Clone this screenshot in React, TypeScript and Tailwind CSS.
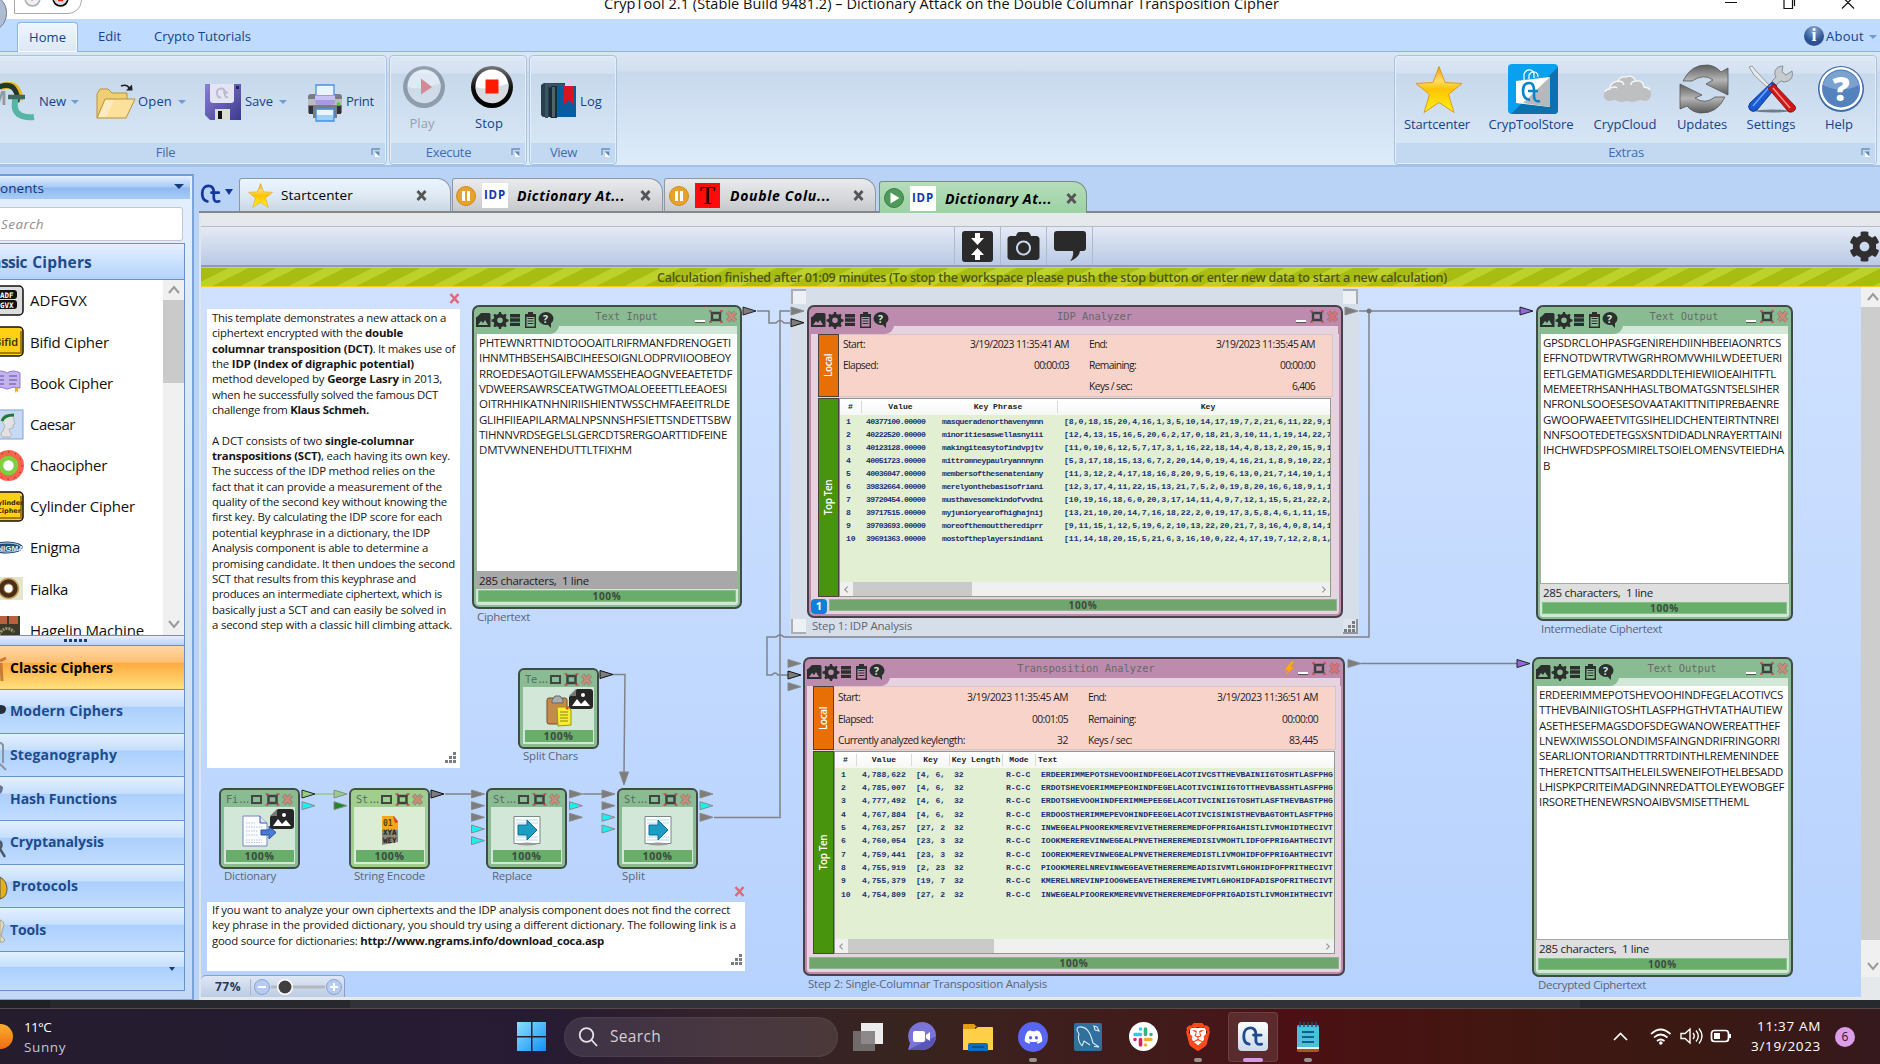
import React, { useLayoutEffect, useRef } from 'react';
import { FaCog, FaCamera, FaDiscord } from 'react-icons/fa';
import { SiBrave } from 'react-icons/si';

type Kids = { children?: React.ReactNode };

/* Text run whose tracking is adjusted so that it fills a given width. */
function Fit({ w, c = '', children }: Kids & { w: number; c?: string }) {
  const ref = useRef<HTMLSpanElement>(null);
  useLayoutEffect(() => {
    const el = ref.current;
    if (!el) return;
    el.style.letterSpacing = '0px';
    const n = (el.textContent || '').length || 1;
    el.style.letterSpacing = `${(w - el.getBoundingClientRect().width) / n}px`;
  }, [w]);
  return <span ref={ref} className={`inline-block whitespace-pre ${c}`}>{children}</span>;
}

/* ---------- shared drawings ---------- */
function Star({ c }: { c: string }) {
  return (
    <svg className={c} viewBox="0 0 48 48">
      <defs>
        <linearGradient id="starFill" x1="0" y1="0" x2="0" y2="1">
          <stop offset="0" stopColor="#fb9b12" />
          <stop offset=".3" stopColor="#fedc6a" />
          <stop offset=".5" stopColor="#ffc400" />
          <stop offset="1" stopColor="#fff31c" />
        </linearGradient>
      </defs>
      <path d="M24 1l6 16 17 1-13.500 11 5.500 18-15-10-15 10 5.500-18L1 18l17-1z" fill="url(#starFill)" stroke="#dd9a1d" strokeWidth="1" />
    </svg>
  );
}

function CtMark({ c, color = '#12449a', w = 3 }: { c: string; color?: string; w?: number }) {
  return (
    <svg className={c} viewBox="0 0 24 22" fill="none" stroke={color} strokeWidth={w} strokeLinecap="round">
      <path d="M7.500 19C3 18.500 1.800 14.500 1.800 10.500 1.800 5 5 2 8.500 2c4 0 6 3 6 7v6.500c0 3 2 4.500 6 3.500M12 9.500h8" />
    </svg>
  );
}

function Caret({ c = '' }: { c?: string }) {
  return <span className={`inline-block h-0 w-0 border-x-[4px] border-t-[4px] border-x-transparent border-t-[#6d9cd3] ${c}`} />;
}

function RoundButton({ play = false, c }: { play?: boolean; c: string }) {
  return (
    <svg viewBox="0 0 44 44" className={c} opacity={play ? 0.42 : 1}>
      <defs>
        <linearGradient id="rim" x1="0" y1="0" x2="0" y2="1">
          <stop offset="0" stopColor="#777" />
          <stop offset=".5" stopColor="#111" />
          <stop offset="1" stopColor="#000" />
        </linearGradient>
      </defs>
      <circle cx="22" cy="22.500" r="21" fill={play ? '#3c4654' : 'url(#rim)'} />
      <circle cx="22" cy="21.500" r="16.500" fill="#fff" />
      <path d="M5.500 22.500c9 3 19 .5 33-3.500v3a16.500 16.500 0 0 1-33 .5z" fill="#d7dbe2" />
      {play ? <path d="M19 14l11 8.500L19 30z" fill="#e51a1a" /> : <path d="M15.500 15h13v14h-13z" fill="#ff1a00" />}
    </svg>
  );
}

/* ---------- ribbon ---------- */
function Launcher() {
  return (
    <svg className="h-[9px] w-[10px]" viewBox="0 0 10 9">
      <path d="M1 7V1h8" fill="none" stroke="#6a90b8" strokeWidth="1.300" />
      <path d="M4 4h5v5H4z" fill="#fff" />
      <path d="M3.500 3.500h5v5z" fill="#5f88b4" />
    </svg>
  );
}

function Group({ title, c, foot = 'pr-[19px]', children }: Kids & { title: string; c: string; foot?: string }) {
  return (
    <section className={`flex h-[110px] flex-col overflow-hidden rounded-[4px] border border-[#a9c3de] bg-[linear-gradient(180deg,#dde8f5_0,#d4e1f1_17px,#c7d8ec_18px,#d6e6f5_88px)] shadow-[inset_0_0_0_1px_#e3eefa] ${c}`}>
      <div className="relative flex min-h-0 flex-1">{children}</div>
      <footer className={`relative mx-px mb-px flex h-[20px] items-center justify-center bg-[#c2d9f1] text-[13px] text-[#3e6cb5] ${foot}`}>
        <span className="tracking-[-0.3px]">{title}</span>
        <span className="absolute right-[4px] top-[5px] flex"><Launcher /></span>
      </footer>
    </section>
  );
}

function BigButton({ label, w, c, icon }: { label: string; w: number; c: string; icon: React.ReactNode }) {
  return (
    <div className={`flex flex-col items-center pt-[8px] ${c}`}>
      <div className="flex h-[50px] items-center justify-center">{icon}</div>
      <div className="mt-px leading-[19px]"><Fit w={w}>{label}</Fit></div>
    </div>
  );
}

const FolderIcon = () => (
  <svg className="h-[38px] w-[40px]" viewBox="0 0 40 38">
    <path d="M1 35V11l3-5h8l4 4h15v7" fill="#f0cf74" stroke="#b8913a" />
    <path d="M1 35l8-19h30l-9 19z" fill="#fbe19b" stroke="#b8913a" />
    <path d="M2.500 34l7.500-17h8l-8 17z" fill="#fff" opacity=".35" />
    <path d="M25 3c5-2 8 0 9 4" fill="none" stroke="#222" strokeWidth="1.600" />
    <path d="M30 7.500h6.500l-.5-6z" fill="#222" />
  </svg>
);
const SaveIcon = () => (
  <svg className="h-[38px] w-[38px]" viewBox="0 0 38 38">
    <defs>
      <linearGradient id="flp" x1="0" y1="0" x2="1" y2="1">
        <stop offset="0" stopColor="#8a80d6" /><stop offset="1" stopColor="#3c3a8c" />
      </linearGradient>
    </defs>
    <path d="M1 1h36v36H6l-5-5z" fill="url(#flp)" />
    <path d="M6 1h24v16c0 2-1 3-3 3H9c-2 0-3-1-3-3z" fill="#e4e4f2" />
    <path d="M17 14.500c-5 .5-6-9 0-9 4 0 4 3 4 6 0 2 1 3 3 2.500M19 9.500h5" fill="none" stroke="#b9bbd0" strokeWidth="2" />
    <path d="M11 26h15v11H11z" fill="#dcdcd8" />
    <path d="M14 28h4v8h-4z" fill="#111" />
    <path d="M32 3h3v3h-3z" fill="#242463" />
  </svg>
);
const PrintIcon = () => (
  <svg className="h-[38px] w-[36px]" viewBox="0 0 36 38">
    <path d="M1 13q0-3 3-3h28q3 0 3 3v16h-5v5H6v-5H1z" fill="#7a7c84" />
    <path d="M1 15h34v6H1z" fill="#b9bac4" />
    <path d="M2 22h4v8H2zM30 22h4v8h-4z" fill="#303138" />
    <path d="M9 1h18v12H9z" fill="#eaf4ff" stroke="#4a90e2" strokeWidth="1.300" />
    <path d="M8 11h20v6q0 4-4 4H12q-4 0-4-4z" fill="#a69be0" />
    <path d="M8 12h20v4H8z" fill="#c9c1f4" />
    <path d="M9 25h18v12H9z" fill="#9fd0f6" stroke="#4a90e2" strokeWidth="1.300" />
    <path d="M10 26h16v5H10z" fill="#e8f5ff" />
    <circle cx="31.500" cy="20" r="1.700" fill="#42d410" />
  </svg>
);
const BooksIcon = () => (
  <svg className="h-[38px] w-[38px]" viewBox="0 0 38 38">
    <path d="M1 3l3-2h21v34H3l-2-2z" fill="#27404e" />
    <path d="M5 1l20 1v3H8v31H5z" fill="#3c5362" />
    <path d="M9 7l3-3h24v31H11l-2-2z" fill="#0d63a8" />
    <path d="M9 7l3-3h5v32h-6l-2-2z" fill="#1c2b38" />
    <path d="M12 5h3v30h-3z" fill="#4e6370" />
    <path d="M17 4h19v31H17z" fill="#0b5c9e" />
    <path d="M24 4h10v19l-5-5-5 5z" fill="#d8141c" />
  </svg>
);
const NewIcon = () => (
  <svg className="h-[40px] w-[36px]" viewBox="0 0 36 40">
    <text x="-11" y="23" fontFamily="Open Sans" fontSize="19" fontWeight="700" fill="#8b9aa5">M</text>
    <path d="M0 5q14-5 18 5 2 4 1 8" fill="none" stroke="#e7b91b" strokeWidth="7" />
    <path d="M-1 5q13-5 17 5 2 4 1 10" fill="none" stroke="#26352f" strokeWidth="5" />
    <path d="M16 14q-4 15 4 19 5 3 14 2" fill="none" stroke="#56b5a5" strokeWidth="6" />
    <path d="M8 15h17" stroke="#3a6a60" strokeWidth="4.500" />
  </svg>
);
const StoreIcon = () => (
  <svg className="h-[50px] w-[50px]" viewBox="0 0 50 50">
    <rect width="50" height="50" rx="4" fill="#0aa0f0" />
    <path d="M50 3v43q0 4-4 4H3z" fill="#0a72ac" />
    <path d="M8 17l34-4v30L8 39z" fill="#fff" />
    <path d="M42 13v30L15 39z" fill="#b6b8ba" />
    <path d="M16 16V10q2-5 7-4l3 2v6M21 15v-4q2-4 6-3 3 1 3 5" fill="none" stroke="#fff" strokeWidth="1.200" />
    <path d="M22 36c-5 0-7-5-7-9 0-5 2-8 6-8s5 3 5 7v6c0 4 2 6 6 5M20 27h10" fill="none" stroke="#0b83c9" strokeWidth="2.600" />
  </svg>
);
const CloudIcon = () => (
  <svg className="h-[28px] w-[49px]" viewBox="0 0 49 28">
    <path d="M6 26q-6-1-5-7 1-5 6-5 0-7 8-8 2-5 8-4 6-3 10 4 7-1 8 6 8 1 7 8-1 5-5 6l-6-1-7 2-6-1-6 1-6-2z" fill="#bdbfc0" />
    <path d="M2 17q1-3 5-3 0-7 8-8 2-5 8-4 6-3 10 4 7-1 8 6 4 0 6 3M15 6q5 0 6 4M33 6q-5 0-5 4M8 13q4-2 6 0" fill="none" stroke="#f8f8f8" strokeWidth="1.300" />
  </svg>
);
const UpdatesIcon = () => (
  <svg className="h-[50px] w-[50px]" viewBox="0 0 50 50">
    <defs>
      <linearGradient id="upd" x1="0" y1="0" x2="0" y2="1">
        <stop offset="0" stopColor="#5e5e5e" /><stop offset=".5" stopColor="#b4b4b4" /><stop offset="1" stopColor="#585858" />
      </linearGradient>
    </defs>
    <g fill="url(#upd)" stroke="#555" strokeWidth=".8">
      <path d="M4 17Q12 0 29 1q8 1 13 7l7-4v27L27 20l7-4q-9-7-21 1z" />
      <path d="M46 33Q38 50 21 49q-8-1-13-7l-7 3V20l22 11-7 3q10 7 20-1z" />
    </g>
  </svg>
);
const SettingsIcon = () => (
  <svg className="h-[48px] w-[48px]" viewBox="0 0 48 48">
    <ellipse cx="24" cy="46" rx="17" ry="1.500" fill="#6f7d8c" />
    <path d="M1 2l3-1 5 6 14 15-2 2L6 10z" fill="#e6e9ec" stroke="#888" strokeWidth=".8" />
    <path d="M27 6q2-5 8-5l-1 6 4 3 6-4q2 7-4 10-4 2-7 0l-5 4-4-4 4-4q-2-3-1-6z" fill="#c6cbd0" stroke="#7b7f84" strokeWidth=".8" />
    <path d="M24 17l5 4L9 45q-4 3-7 0-3-3 0-7z" fill="#1959d4" stroke="#0b2b7c" strokeWidth=".8" />
    <path d="M23 20L5 41" stroke="#6ea2ff" strokeWidth="1.500" />
    <path d="M20 23l6-4 21 22q2 4-3 6-4 1-5-2z" fill="#d01717" stroke="#7c0b0b" strokeWidth=".8" />
    <path d="M25 23l17 20" stroke="#ff8c8c" strokeWidth="1.500" />
  </svg>
);
const HelpIcon = () => (
  <svg className="h-[48px] w-[48px]" viewBox="0 0 48 48">
    <circle cx="24" cy="24" r="23" fill="#3d6aa8" />
    <circle cx="24" cy="23.500" r="21.500" fill="#fff" />
    <circle cx="24" cy="23.500" r="19" fill="#5382bd" />
    <path d="M6 20a18.500 18.500 0 0 1 36 0q-18 9-36 0z" fill="#7ba1d0" />
    <text x="24" y="36" textAnchor="middle" fontFamily="Open Sans" fontSize="34" fontWeight="800" fill="#fff">?</text>
  </svg>
);

function Ribbon() {
  return (
    <div className="flex flex-col">
      <div className="relative h-[19px] overflow-hidden bg-white">
        <div className="absolute -top-[10px] left-[14px] h-[24px] w-[68px] rounded-br-[14px] border border-[#a9a9a9]" />
        <div className="absolute left-[24px] top-[-10px]"><RoundButton play c="h-[17px] w-[17px]" /></div>
        <div className="absolute left-[52px] top-[-10px]"><RoundButton c="h-[17px] w-[17px]" /></div>
        <div className="absolute left-[604px] top-[-8px] text-[14.5px] leading-[23px] text-[#111]">
          <Fit w={675}>CrypTool 2.1 (Stable Build 9481.2) – Dictionary Attack on the Double Columnar Transposition Cipher</Fit>
        </div>
        <svg className="absolute right-0 top-0 h-[10px] w-[160px]" viewBox="0 0 160 10" fill="none" stroke="#111" strokeWidth="1.200">
          <path d="M5 2.500h12M64 -2v10.500h8.500V-1M74.500 -2v8M122 8.500L134 -3.500M134 8.500L122 -3.500" />
        </svg>
      </div>
      <div className="relative flex h-[33px] items-end border-b border-[#8db2e3] bg-[#bfdbff] text-[13px] text-[#15428b]">
        <div className="absolute -left-[30px] -top-[25px] h-[38px] w-[37px] rounded-full border border-[#6f7f96] bg-[#aebdd2]" />
        <div className="ml-[17px] -mb-px flex h-[30px] w-[61px] items-center justify-center rounded-t-[4px] border border-b-0 border-[#8db2e3] bg-[linear-gradient(#eff5fc,#dde8f5)] shadow-[inset_0_0_0_1px_#f6faff]"><Fit w={37}>Home</Fit></div>
        <div className="ml-[20px] flex h-[28px] items-center"><Fit w={23}>Edit</Fit></div>
        <div className="ml-[33px] flex h-[28px] items-center"><Fit w={97}>Crypto Tutorials</Fit></div>
        <div className="ml-auto mr-[3px] flex h-[28px] items-center">
          <span className="mb-[3px] mr-[2px] flex h-[20px] w-[20px] items-center justify-center rounded-full bg-[radial-gradient(circle_at_50%_20%,#8fa9cf,#2c5292_60%)] font-['Liberation_Serif'] text-[18px] font-bold text-white">i</span>
          <Fit w={38}>About</Fit><Caret c="ml-[5px]" />
        </div>
      </div>
      <div className="flex h-[115px] border-b-2 border-b-[#a3c2ea] bg-[linear-gradient(180deg,#dbe6f4_0,#d3e0f0_18px,#c9d9ed_20px,#dcecfa_112px)] pt-[3px] text-[13px] text-[#15428b]">
        <Group title="File" c="-ml-[60px] w-[447px]" foot="pl-[4px]">
          <div className="ml-[59px] flex flex-1 items-center pt-[4px]">
            <div className="flex w-[36px]"><NewIcon /></div>
            <div className="ml-[3px]"><Fit w={27}>New</Fit></div><Caret c="ml-[5px]" />
            <div className="ml-[17px] flex"><FolderIcon /></div><div className="ml-[2px]"><Fit w={34}>Open</Fit></div><Caret c="ml-[6px]" />
            <div className="ml-[18px] flex"><SaveIcon /></div><div className="ml-[3px]"><Fit w={28}>Save</Fit></div><Caret c="ml-[6px]" />
            <div className="ml-[20px] flex pt-[2px]"><PrintIcon /></div><div className="ml-[3px]"><Fit w={28}>Print</Fit></div>
          </div>
        </Group>
        <Group title="Execute" c="ml-[2px] w-[138px]">
          <div className="ml-[12px] flex w-[44px] flex-col items-center pt-[8px] text-[#9aa0a8]"><RoundButton play c="h-[45px] w-[44px]" /><div className="mr-[4px] mt-[5px] leading-[19px]"><Fit w={25}>Play</Fit></div></div>
          <div className="ml-[24px] flex w-[44px] flex-col items-center pt-[8px]"><RoundButton c="h-[45px] w-[44px]" /><div className="mr-[6px] mt-[5px] leading-[19px]"><Fit w={28}>Stop</Fit></div></div>
        </Group>
        <Group title="View" c="ml-[2px] w-[88px]">
          <div className="ml-[10px] flex items-center pt-[2px]"><BooksIcon /><div className="ml-[2px] pt-[2px]"><Fit w={22}>Log</Fit></div></div>
        </Group>
        <Group title="Extras" c="ml-auto mr-[3px] w-[483px]">
          <BigButton c="ml-[2px] w-[80px]" label="Startcenter" w={66} icon={<Star c="ml-[3px] h-[49px] w-[48px]" />} />
          <BigButton c="ml-[9px] w-[90px]" label="CrypToolStore" w={85} icon={<div className="ml-[3px]"><StoreIcon /></div>} />
          <BigButton c="ml-[9px] w-[80px]" label="CrypCloud" w={63} icon={<div className="ml-[4px]"><CloudIcon /></div>} />
          <BigButton c="ml-[7px] w-[60px]" label="Updates" w={50} icon={<div className="ml-[3px]"><UpdatesIcon /></div>} />
          <BigButton c="ml-[9px] w-[60px]" label="Settings" w={49} icon={<div className="ml-[2px]"><SettingsIcon /></div>} />
          <BigButton c="ml-[8px] w-[60px]" label="Help" w={28} icon={<div className="ml-[4px]"><HelpIcon /></div>} />
        </Group>
      </div>
    </div>
  );
}

/* ---------- sidebar ---------- */
const components: { name: string; w: number; icon: React.ReactNode }[] = [
  { name: 'ADFGVX', w: 57, icon: <><rect x="-6" y="1" width="29" height="29" rx="4" fill="#ddd" stroke="#111" strokeWidth="1.500" /><rect x="-3" y="5" width="20" height="9" rx="3" fill="#111" /><rect x="-3" y="15" width="20" height="9" rx="3" fill="#111" /><text x="0" y="12.500" fontSize="7.500" fontWeight="700" fontFamily="DejaVu Sans Mono" fill="#fff">ADF</text><text x="0" y="22.500" fontSize="7.500" fontWeight="700" fontFamily="DejaVu Sans Mono" fill="#fff">GVX</text></> },
  { name: 'Bifid Cipher', w: 79, icon: <><rect x="-6" y="1" width="29" height="29" rx="4" fill="#ffd014" stroke="#111" strokeWidth="1.500" /><path d="M-4 27h25V5" fill="none" stroke="#a87e00" strokeWidth="2" /><text x="-6" y="19.500" fontSize="11" fontWeight="600" fontFamily="Open Sans" fill="#3a2b00">Bifid</text></> },
  { name: 'Book Cipher', w: 83, icon: <><path d="M-5 6q6-4 12 0 6-4 13 0v15q-7-2-13 1-6-3-12-1z" fill="#c4b4ee" stroke="#8c7ccc" /><path d="M9 9h8M9 13h8M9 17h7M-1 9h5M-1 13h5M-1 17h5" stroke="#5b4ba0" strokeWidth="1.200" /><path d="M15 21h3v5l-1.500-2-1.500 2z" fill="#f2b41b" /></> },
  { name: 'Caesar', w: 45, icon: <><rect x="-6" y="1" width="29" height="29" fill="#c7daf2" stroke="#7ba4dc" /><path d="M3 22q-4 3 0 6h7q3-2 0-5l-1-3 4-1v-3l2-1-1-3q1-4-3-6-7-2-9 3-1 4 3 8z" fill="#e2e2e2" stroke="#999" strokeWidth=".6" /><path d="M2 12Q4 6 14 6" fill="none" stroke="#1c7a38" strokeWidth="3" /></> },
  { name: 'Chaocipher', w: 77, icon: <><circle cx="8.500" cy="15.500" r="12" fill="none" stroke="#f5654d" strokeWidth="7" /><circle cx="8.500" cy="15.500" r="7.500" fill="#fff" stroke="#7fd03c" strokeWidth="4.500" /><circle cx="8.500" cy="15.500" r="13.500" fill="none" stroke="#5c1d12" strokeWidth="1" strokeDasharray="1 6" /></> },
  { name: 'Cylinder Cipher', w: 105, icon: <><rect x="-6" y="1" width="29" height="29" rx="4" fill="#ffd014" stroke="#111" strokeWidth="1.500" /><path d="M-4 27h25V5" fill="none" stroke="#a87e00" strokeWidth="2" /><text x="-7" y="14" fontSize="6.500" fontWeight="700" fontFamily="DejaVu Sans" fill="#3a2b00">Cylinder</text><text x="-3" y="22" fontSize="6.500" fontWeight="700" fontFamily="DejaVu Sans" fill="#3a2b00">Cipher</text></> },
  { name: 'Enigma', w: 50, icon: <><ellipse cx="7" cy="15.500" rx="16" ry="6" fill="#1b4a7a" /><ellipse cx="7" cy="15.500" rx="14" ry="4.500" fill="none" stroke="#bcd6ec" /><text x="-8" y="18.500" fontSize="8" fontWeight="700" fontFamily="Liberation Sans" fill="#e2effa">ENIGMA</text></> },
  { name: 'Fialka', w: 38, icon: <><rect x="-6" y="4" width="29" height="23" fill="#e3e6cc" /><circle cx="8.500" cy="15.500" r="10" fill="#4a2f18" stroke="#c59a5c" strokeWidth="1.500" /><circle cx="8.500" cy="15.500" r="4.500" fill="#fff" stroke="#b98c54" /></> },
  { name: 'Hagelin Machine', w: 114, icon: <><rect x="-6" y="1" width="26" height="28" fill="#3d3a2c" /><path d="M0 1h7v8H0zM9 1h9v8H9z" fill="#b9603f" /><path d="M-4 25q8-18 18-8" fill="none" stroke="#9a9670" strokeWidth="3" strokeDasharray="2 1" /></> },
];

const categories: { name: string; w: number; c: string; icon: React.ReactNode }[] = [
  { name: 'Modern Ciphers', w: 113, c: 'pl-[10px]', icon: <path d="M0 7q6 0 6 4 0 5-6 5z" fill="#26303c" /> },
  { name: 'Steganography', w: 107, c: 'pl-[10px]', icon: <path d="M0 0l3 3v18M0 22l6 6" fill="none" stroke="#8b949c" strokeWidth="2" /> },
  { name: 'Hash Functions', w: 107, c: 'pl-[10px]', icon: <path d="M0 0l3 2q0 5-3 7z" fill="#6a7390" /> },
  { name: 'Cryptanalysis', w: 94, c: 'pl-[10px]', icon: <path d="M0 12q3 4 0 8l5 8" fill="none" stroke="#4a5866" strokeWidth="2.500" /> },
  { name: 'Protocols', w: 66, c: 'pl-[12px]', icon: <path d="M0 4q7 4 7 12 0 8-7 10z" fill="#e2b21c" stroke="#555" /> },
  { name: 'Tools', w: 36, c: 'pl-[10px]', icon: <path d="M0 4q6 2 3 8l-2 8 4 4q-2 3-5 2z" fill="#e6dcbc" stroke="#96928a" strokeWidth=".8" /> },
];

function Chevron({ c, d, sw = 2 }: { c: string; d: string; sw?: number }) {
  return <svg className={c} viewBox="0 0 12 12" fill="none" stroke="#9a9a9a" strokeWidth={sw}><path d={d} /></svg>;
}

function Sidebar() {
  return (
    <aside className="flex h-[826px] w-[194px] flex-col border-b border-r-2 border-t-2 border-b-[#7ba3dc] border-r-[#7ba3dc] border-t-[#6f9bd8] bg-[linear-gradient(#e3effd,#d4e3f5_50%,#c3d9f5)]">
      <header className="mt-px flex h-[22px] w-[190px] items-center justify-between bg-[linear-gradient(#dceafd_0,#aacbf6_45%,#8fb9ef_50%,#a6cbf8_100%)] pr-[6px] text-[13.500px] text-[#10387a]">
        <Fit w={44}>onents</Fit>
        <span className="mb-[3px] inline-block border-x-[5px] border-t-[5px] border-x-transparent border-t-[#153d7a]" />
      </header>
      <div className="mt-[8px] flex h-[34px] w-[183px] items-center rounded-r-[3px] border border-l-0 border-[#c2c7cd] bg-white pl-px text-[13.500px] italic text-[#8c8f94]"><Fit w={43}>Search</Fit></div>
      <div className="mt-[2px] flex h-[748px] w-[185px] flex-col border-y border-r border-[#6593cf] bg-white">
        <div className="relative h-[36px] border-b border-[#6593cf] bg-[linear-gradient(#e4f0ff,#bcd8fd_80%,#b5d4fc)] pl-[28px] pt-[7px] text-[15.500px] font-bold leading-[23px] text-[#1e4b8c]">
          <span className="absolute right-[157px] tracking-[-0.500px]">Classic</span><Fit w={64}> Ciphers</Fit>
        </div>
        <div className="flex h-[355px] overflow-hidden">
          <ul className="flex-1 text-[15px] text-[#111]">
            {components.map((k) => (
              <li key={k.name} className="flex h-[41.200px] items-center">
                <svg className="h-[31px] w-[24px] shrink-0" viewBox="0 0 24 31">{k.icon}</svg>
                <div className="ml-[6px]"><Fit w={k.w}>{k.name}</Fit></div>
              </li>
            ))}
          </ul>
          <div className="flex w-[21px] flex-col items-center bg-[#f0f0f0]">
            <Chevron c="mb-[4px] mt-[4px] h-[12px] w-[12px] shrink-0" d="M1 9l5-6 5 6" />
            <div className="h-[83px] w-full bg-[#cacaca]" />
            <Chevron c="mb-[5px] mt-auto h-[12px] w-[12px]" d="M1 3l5 6 5-6" />
          </div>
        </div>
        <div className="flex h-[11px] items-center justify-center gap-[2px] border-y border-[#6593cf] bg-[linear-gradient(#e3efff,#b7d4fc)] pr-[34px]">
          {[0, 1, 2, 3, 4].map((i) => <i key={i} className="h-[3px] w-[3px] bg-[#1c3f78]" />)}
        </div>
        <div className="relative flex h-[44px] items-center border-b border-[#6593cf] bg-[linear-gradient(#ffd8a6_0,#ffbf73_38%,#ffab3f_40%,#fee07f_100%)] pl-[10px] text-[14px] font-bold text-black">
          <svg className="absolute left-0 top-[10px] h-[28px] w-[8px]" viewBox="0 0 8 28"><path d="M0 5l6-3M1 7l1 18" stroke="#c77d34" strokeWidth="3" /></svg>
          <Fit w={103}>Classic Ciphers</Fit>
        </div>
        {categories.map((k) => (
          <div key={k.name} className={`relative flex h-[43.700px] items-center border-b border-[#6593cf] bg-[linear-gradient(#e3f0ff_0,#c6dffd_38%,#abcffd_40%,#c1ddfe_100%)] pb-px text-[14px] font-bold text-[#1e4b8c] ${k.c}`}>
            <svg className="absolute left-0 top-[8px] h-[30px] w-[8px]" viewBox="0 0 8 30">{k.icon}</svg>
            <Fit w={k.w}>{k.name}</Fit>
          </div>
        ))}
        <div className="flex flex-1 items-center justify-end bg-[linear-gradient(#e3f0ff_0,#c6dffd_38%,#abcffd_40%,#c1ddfe_100%)] pr-[9px]">
          <span className="mb-[4px] inline-block border-x-[3px] border-t-[4px] border-x-transparent border-t-[#153d7a]" />
        </div>
      </div>
    </aside>
  );
}

/* ---------- document tabs ---------- */
function CloseX() {
  return <svg className="h-[11px] w-[11px]" viewBox="0 0 11 11" stroke="#555" strokeWidth="2.800"><path d="M1.500 1l8 9M9.500 1l-8 9" /></svg>;
}
function StateDot({ play = false }: { play?: boolean }) {
  return (
    <svg className="h-[20px] w-[20px]" viewBox="0 0 20 20">
      <circle cx="10" cy="10" r="9.500" fill={play ? '#4f9a5b' : '#e8a22b'} stroke={play ? '#3c7d48' : '#d08a1c'} />
      {play ? <path d="M6.500 4.500l9 5.500-9 5.500z" fill="#fff" /> : <path d="M6 5h3v10H6zM11 5h3v10h-3z" fill="#fff" />}
    </svg>
  );
}
const Idp = () => <span className="flex h-[25px] w-[26px] justify-center bg-white pt-[3px] text-[11.500px] font-bold leading-[17px] text-[#1437b0]"><Fit w={22}>IDP</Fit></span>;
const tabBase = 'flex h-[33px] items-center rounded-tr-[14px] rounded-tl-[3px] border border-b-0 border-[#9097a0] pt-px';
const grayTab = 'bg-[linear-gradient(#e8eaec,#d9dbde_50%,#c6c8cc)]';

function Tabs() {
  return (
    <div className="flex h-[33px] items-end border-b-2 border-[#85888b] text-black">
      <div className="flex h-[29px] w-[40px] items-start gap-[2px] pl-px pt-[2px]"><CtMark c="h-[20px] w-[23px]" color="#14389c" /><span className="mt-[5px] border-x-[4px] border-t-[6px] border-x-transparent border-t-[#14389c]" /></div>
      <div className={`${tabBase} w-[212px] bg-[linear-gradient(#e9f5ff,#dfeaf3_50%,#c9d8e4)] pl-[8px] text-[13.500px]`}>
        <Star c="h-[25px] w-[25px]" /><div className="ml-[8px]"><Fit w={72}>Startcenter</Fit></div><div className="ml-[63px]"><CloseX /></div>
      </div>
      <div className={`${tabBase} ml-px w-[211px] ${grayTab} pl-[3px] text-[14px] font-bold italic`}>
        <StateDot /><div className="ml-[6px] not-italic"><Idp /></div><div className="ml-[9px]"><Fit w={108}>Dictionary At...</Fit></div><div className="ml-[15px]"><CloseX /></div>
      </div>
      <div className={`${tabBase} ml-px w-[212px] ${grayTab} pl-[4px] text-[14px] font-bold italic`}>
        <StateDot /><span className="ml-[6px] flex h-[25px] w-[25px] items-center justify-center bg-[#ff0b0b] font-['Liberation_Serif'] text-[25px] font-normal not-italic leading-none">T</span><div className="ml-[10px]"><Fit w={101}>Double Colu...</Fit></div><div className="ml-[22px]"><CloseX /></div>
      </div>
      <div className="ml-[3px] -mb-[2px] flex h-[32px] w-[208px] items-center rounded-tl-[3px] rounded-tr-[14px] border border-b-0 border-[#7c8a80] bg-[linear-gradient(#b5dcba,#9cd2a4)] pl-[4px] pt-px text-[14px] font-bold italic">
        <StateDot play /><div className="ml-[6px] not-italic"><Idp /></div><div className="ml-[9px]"><Fit w={107}>Dictionary At...</Fit></div><div className="ml-[14px]"><CloseX /></div>
      </div>
    </div>
  );
}

/* ---------- workspace nodes ---------- */
type Tone = 'green' | 'pink' | 'lime';
const frame: Record<Tone, string> = {
  green: 'bg-[#8abc94] border-[#3f4b43]',
  pink: 'bg-[#bd8bae] border-[#4a4148]',
  lime: 'bg-[#9fce8e] border-[#455240]',
};
const pale: Record<Tone, string> = { green: 'bg-[#d2e7d7]', pink: 'bg-[#e7d2df]', lime: 'bg-[#dcedd5]' };

function NetIcon({ c }: { c: string }) {
  return (
    <svg className={c} viewBox="0 0 14 13">
      <path d="M3 3h8v7H3z" fill="none" stroke="#3f3f3f" strokeWidth="2.400" />
      <path d="M1 1l3 3M13 1l-3 3M1 12l3-3M13 12l-3-3" stroke="#4b4b4b" strokeWidth="1.500" />
      <path d="M0 0h3v2H0zM11 0h3v2h-3zM0 11h3v2H0zM11 11h3v2h-3z" fill="#d4505a" opacity=".85" />
    </svg>
  );
}
function FatX({ c, color = '#c58c7a' }: { c: string; color?: string }) {
  return <svg className={c} viewBox="0 0 13 13"><path d="M2.500 2l8 9M10.500 2l-8 9" stroke="#7d6b60" strokeWidth="4.400" opacity=".7" /><path d="M2.500 2l8 9M10.500 2l-8 9" stroke={color} strokeWidth="3" /></svg>;
}

function NodeTools() {
  return (
    <svg className="absolute left-0 top-[3px] h-[17px] w-[79px]" viewBox="0 0 79 17" fill="#2b2f2d">
      <path d="M1 5l4-4h8q1.500 0 1.500 1.500V15H0V5zM2 13h10l-3-5-2 3-2-2z" fillRule="evenodd" />
      <path d="M23 0h2l.5 2 2 .8 1.800-1 1.400 1.400-1 1.800.8 2 2 .5v2l-2 .5-.8 2 1 1.800-1.400 1.400-1.800-1-2 .8-.5 2h-2l-.5-2-2-.8-1.800 1-1.400-1.400 1-1.800-.8-2-2-.5v-2l2-.5.8-2-1-1.800 1.400-1.400 1.800 1 2-.8zM24 5.500a2.800 2.800 0 1 0 0 5.600 2.800 2.800 0 0 0 0-5.600z" fillRule="evenodd" />
      <path d="M34 2h10v3.400H34zM34 6.300h10v3.400H34zM34 10.700h10V14H34z" />
      <path d="M49 2h3V0h5v2h3v14H49zM50.500 5v9.500h8V5z" fillRule="evenodd" />
      <path d="M51.500 6.500h6M51.500 9h6M51.500 11.500h6" stroke="#2b2f2d" />
      <ellipse cx="70" cy="6.500" rx="7.500" ry="6.500" />
      <path d="M70 11l5 5v-6z" />
      <text x="67" y="10.500" fontFamily="Open Sans" fontWeight="700" fontSize="10.500" fill="#d8e8dc">?</text>
    </svg>
  );
}

function Node({ box, tone, title, flash, badge, children }: Kids & { box: string; tone: Tone; title: string; flash?: boolean; badge?: boolean }) {
  return (
    <div className={`absolute flex flex-col rounded-[7px] border-2 p-[2px] ${box} ${frame[tone]}`}>
      <div className="relative h-[25px] shrink-0">
        <div className={`absolute bottom-0 left-[50px] right-[1px] h-[8px] ${pale[tone]}`} />
        <div className={`absolute bottom-0 left-0 h-[12px] w-[83px] rounded-br-[9px] ${tone === 'pink' ? 'bg-[#bd8bae]' : 'bg-[#8abc94]'}`} />
        <NodeTools />
        <div className="flex h-[15px] items-center justify-end">
          <div className="-mt-px ml-[82px] flex-1 text-center font-['DejaVu_Sans_Mono'] text-[10.400px] leading-[14px] text-[#666a68]">{title}</div>
          {flash && <svg className="mr-[2px] h-[15px] w-[13px]" viewBox="0 0 12 15"><path d="M8 0L1 9h4l-4 6 10-9H7l4-6z" fill="#ffab1d" stroke="#ef9216" strokeWidth=".6" /></svg>}
          <i className="mt-[9px] h-[2px] w-[10px] bg-white shadow-[0_1px_0_#555]" />
          <NetIcon c="ml-[4px] h-[13px] w-[14px]" />
          <FatX c="ml-[2px] h-[13px] w-[13px]" color={tone === 'pink' ? '#d9707c' : '#c58c7a'} />
        </div>
      </div>
      <div className={`flex min-h-0 flex-1 flex-col rounded-b-[3px] ${pale[tone]}`}>
        {children}
        <div className={`mx-[2px] mb-[3px] mt-auto flex h-[12px] shrink-0 items-center justify-center border text-[10px] font-bold leading-none text-[#3c4a3f] ${tone === 'pink' ? 'border-[#8fb58e] bg-[#70a66e]' : 'border-[#83c186] bg-[#68ae6a]'} ${badge ? 'ml-[18px]' : ''}`}><Fit w={29}>100%</Fit></div>
      </div>
    </div>
  );
}

function TextNode({ box, title, lines, status }: { box: string; title: string; lines: [string, number][]; status: string }) {
  return (
    <Node box={box} tone="green" title={title}>
      <div className="-mt-px flex-1 border border-[#a5aaa7] bg-white pl-[2px] pt-px text-[11.500px] leading-[15.350px] text-[#1d1d1d]">
        {lines.map(([t, w]) => <div key={t} className="h-[15.350px]"><Fit w={w}>{t}</Fit></div>)}
      </div>
      <div className={`mb-px h-[17px] pl-[3px] text-[11.500px] leading-[17px] text-[#1d1d1d] ${status}`}><Fit w={110}>{'285 characters,  1 line'}</Fit></div>
    </Node>
  );
}

function Small({ box, tone = 'green', title, pic, children }: Kids & { box: string; tone?: Tone; title: string; pic?: boolean }) {
  return (
    <div className={`absolute h-[81px] w-[81px] rounded-[6px] border-2 p-[3px] pt-[2px] ${box} ${frame[tone]}`}>
      <div className="flex h-[15px] items-center">
        <span className="-mt-[2px] w-[25px] pl-[2px] font-['DejaVu_Sans_Mono'] text-[10.400px] leading-[14px] tracking-[-0.300px] text-[#5d6a60]">{title}<span className="tracking-[-3px]">...</span></span>
        <i className="ml-[2px] h-[9px] w-[11px] border-[2.500px] border-[#444]" />
        <NetIcon c="ml-[3px] h-[13px] w-[15px]" />
        <FatX c="ml-[1px] h-[13px] w-[13px]" />
      </div>
      <div className={`relative flex h-[57px] flex-col items-center ${pale[tone]}`}>
        <div className="flex h-[43px] items-center justify-center pt-[4px]">{children}</div>
        {pic && (
          <svg className="absolute right-[1px] top-[2px] h-[20px] w-[24px]" viewBox="0 0 24 20">
            <path d="M8 0h13q3 0 3 3v14q0 3-3 3H3q-3 0-3-3V8z" fill="#262626" /><path d="M0 7l7-7v7z" fill="#777" />
            <circle cx="14" cy="6" r="2" fill="#fff" /><path d="M3 17l5-7 4 5 4-4 5 6z" fill="#fff" />
          </svg>
        )}
        <div className="flex h-[12px] w-[68px] items-center justify-center bg-[#68ae6a] text-[10.500px] font-bold leading-none text-[#3c4a3f]"><Fit w={30}>100%</Fit></div>
      </div>
    </div>
  );
}

const ArrowPic = () => (
  <svg className="h-[30px] w-[28px]" viewBox="0 0 28 30">
    <path d="M1 .5h26v27H1z" fill="#fff" stroke="#7b8a86" /><path d="M3 4h22M3 7h22M3 21h22M3 24h22" stroke="#aed8ea" /><ellipse cx="14" cy="28" rx="10" ry="1.500" fill="#999" />
    <path d="M5 9h9V4l10 10-10 10v-5H5z" fill="#1d9dc4" stroke="#0d6f95" />
  </svg>
);

function Port({ x, y, f, s = '#8a8a8a' }: { x: number; y: number; f: string; s?: string }) {
  return <path d={`M${x} ${y - 4}l13 4-13 4z`} fill={f} stroke={s} strokeWidth="1" />;
}

const G = '#7d7d7d';
const CY = '#19f0f0';

function Wires() {
  return (
    <svg className="absolute left-0 top-0 h-[1000px] w-[1861px]" viewBox="0 0 1861 1000">
      <g fill="none" stroke="#7f8389" strokeWidth="1.500">
        <path d="M757 311h12v12h7q4-5 8 0h6M714 817.500h66V311h10" />
        <path d="M1359 311h163M1369 311v326H784q-4-4-8 0h-9v38h5q3-4 6 0h11" />
        <path d="M1361 663.500h156M613 674.500h12l-1 98M445 794h26M583 794h19" />
        <path d="M315 794h19" stroke="#93c98a" />
      </g>
      <circle cx="1369" cy="311" r="2.500" fill="#777" />
      <Port x={743} y={311} f={G} s="#222" />
      <Port x={791} y={311} f={G} /><Port x={791} y={322.700} f={G} s="#111" /><Port x={1345} y={311} f={G} />
      <Port x={1520} y={311} f="#9268dd" s="#222" /><Port x={1517} y={663.500} f="#9268dd" s="#222" />
      <Port x={788} y={663.500} f={G} /><Port x={788} y={675} f={G} s="#111" /><Port x={788} y={686.700} f={G} /><Port x={1348} y={663.500} f={G} />
      <Port x={302} y={794} f="#93cf80" s="#222" /><Port x={302} y={805.700} f={CY} />
      <Port x={334} y={794} f="#98cc8a" /><Port x={334} y={805.700} f="#1c8a1c" />
      <Port x={431} y={794} f={G} s="#111" />
      <Port x={471.500} y={794} f={G} /><Port x={471.500} y={805.700} f={G} /><Port x={471.500} y={817.300} f={G} /><Port x={471.500} y={829} f={CY} /><Port x={471.500} y={840.600} f={CY} />
      <Port x={569.500} y={794} f={G} /><Port x={569.500} y={805.700} f={CY} /><Port x={569.500} y={817.300} f={G} />
      <Port x={602} y={794} f={G} /><Port x={602} y={805.700} f={G} /><Port x={602} y={817.300} f={CY} /><Port x={602} y={829} f={CY} />
      <Port x={700} y={794} f={G} /><Port x={700} y={805.700} f={CY} /><Port x={700} y={817.300} f={G} />
      <Port x={600} y={674.500} f={G} s="#111" />
      <path d="M619.500 772h9l-4.500 13z" fill={G} stroke="#8a8a8a" />
    </svg>
  );
}

function Grip({ c }: { c: string }) {
  return (
    <svg className={`absolute h-[12px] w-[12px] ${c}`} viewBox="0 0 12 12" fill="#7a7d80">
      <path d="M8 0h3v3H8zM4 4h3v3H4zM8 4h3v3H8zM0 8h3v3H0zM4 8h3v3H4zM8 8h3v3H8z" />
    </svg>
  );
}
function RedX({ c }: { c: string }) {
  return <svg className={`absolute h-[11px] w-[11px] ${c}`} viewBox="0 0 11 11"><path d="M1.500 1l8 9M9.500 1l-8 9" stroke="#e2667c" strokeWidth="2.600" /></svg>;
}
function Caption({ c, w, children }: Kids & { c: string; w: number }) {
  return <div className={`absolute text-[11.500px] leading-[16px] text-[#5c6673] ${c}`}><Fit w={w}>{children}</Fit></div>;
}

/* ---------- analyzers ---------- */
function Stat({ label, lw, value, vw }: { label: string; lw: number; value: string; vw: number }) {
  return <div className="flex justify-between"><Fit w={lw}>{label}</Fit><Fit w={vw}>{value}</Fit></div>;
}
function Side({ c, children }: Kids & { c: string }) {
  return (
    <div className={`flex w-[21px] shrink-0 items-center justify-center border border-[#4e4238] text-[10px] font-semibold text-white ${c}`}>
      <span className="-rotate-90 whitespace-nowrap tracking-[-0.400px]">{children}</span>
    </div>
  );
}
function HScroll({ c }: { c: string }) {
  return (
    <div className="mt-auto flex h-[14px] items-center justify-between bg-[#f0f0f0] px-[3px]">
      <Chevron c="h-[7px] w-[7px]" d="M8 1L3 6l5 5" /><div className={`mr-auto h-full bg-[#cacaca] ${c}`} /><Chevron c="h-[7px] w-[7px]" d="M4 1l5 5-5 5" />
    </div>
  );
}

const idpRows = [
  ['40377100.00000', 'masqueradenorthavenymnn', '[8,0,18,15,20,4,16,1,3,5,10,14,17,19,7,2,21,6,11,22,9,12'],
  ['40222520.00000', 'minoritiesaswellasnyiii', '[12,4,13,15,16,5,20,6,2,17,0,18,21,3,10,11,1,19,14,22,7,'],
  ['40123128.00000', 'makingiteasytofindvpjtv', '[11,0,10,6,12,5,7,17,3,1,16,22,18,14,4,8,13,2,20,15,9,19'],
  ['40051723.00000', 'mittromneypaulryannnynn', '[5,3,17,18,15,13,6,7,2,20,14,0,19,4,16,21,1,8,9,10,22,11'],
  ['40036047.00000', 'membersofthesenateniany', '[11,3,12,2,4,17,18,16,8,20,9,5,19,6,13,0,21,7,14,10,1,15'],
  ['39832664.00000', 'merelyonthebasisofriani', '[12,3,17,4,11,22,15,13,21,7,5,2,0,19,8,20,16,6,18,9,1,14'],
  ['39720454.00000', 'musthavesomekindofvvdni', '[10,19,16,18,6,0,20,3,17,14,11,4,9,7,12,1,15,5,21,22,2,1'],
  ['39717515.00000', 'myjunioryearofhighajnij', '[13,21,10,20,14,7,16,18,22,2,0,19,17,3,5,8,4,6,1,11,15,9'],
  ['39703693.00000', 'moreofthemouttherediprr', '[9,11,15,1,12,5,19,6,2,10,13,22,20,21,7,3,16,4,0,8,14,17'],
  ['39691363.00000', 'mostoftheplayersindiani', '[11,14,18,20,15,5,21,6,3,16,10,0,22,4,17,19,7,12,2,8,1,1'],
];
const transRows = [
  ['4,788,622', '[4, 6,', 'ERDEERIMMEPOTSHEVOOHINDFEGELACOTIVCSTTHEVBAINIIGTOSHTLASFPHG'],
  ['4,785,007', '[4, 6,', 'ERDOTSHEVOERIMMEPEOHINDFEGELACOTIVCINIIGTOTTHEVBASSHTLASFPHG'],
  ['4,777,492', '[4, 6,', 'ERDOTSHEVOOHINDFERIMMEPEEGELACOTIVCINIIGTOSHTLASFTHEVBASTPHG'],
  ['4,767,884', '[4, 6,', 'ERDOOSTHERIMMEPEVOHINDFEEGELACOTIVCISINISTHEVBAGTOHTLASFTPHG'],
  ['4,763,257', '[27, 2', 'INWEGEALPNOOREKMEREVIVETHEREREMEDFOFPRIGAHISTLIVMOHIDTHECIVT'],
  ['4,760,054', '[23, 3', 'IOOKMEREREVINWEGEALPNVETHEREREMEDISIVMOHTLIDFOFPRIGAHTHECIVT'],
  ['4,759,441', '[23, 3', 'IOOREKMEREVINWEGEALPNVETHEREREMEDISTLIVMOHIDFOFPRIGAHTHECIVT'],
  ['4,755,919', '[2, 23', 'PIOOKMERELNREVINWEGEAVETHEREREMEADISIVMTLGHOHIDFOFPRITHECIVT'],
  ['4,755,379', '[19, 7', 'KMERELNREVINPIOOGWEEAVETHEREREMEIVMTLGHOHIDFADISPOFRITHECIVT'],
  ['4,754,809', '[27, 2', 'INWEGEALPIOOREKMEREVNVETHEREREMEDFOFPRIGADISTLIVMOHIHTHECIVT'],
];

const tableBase = "flex min-w-0 flex-1 flex-col overflow-hidden border border-[#8f9a8c] bg-[#e2efd2] font-['Liberation_Mono'] text-[8.120px] font-bold text-[#1b2f74]";
const headBase = 'grid h-[16px] shrink-0 items-center whitespace-pre bg-[linear-gradient(#fff,#f6f8f5)] text-center text-[#222]';
const localBase = 'grid flex-1 grid-cols-2 content-between gap-x-[20px] border border-l-0 border-[#d9c5c3] bg-[#f8d3ca] pl-[4px] text-[10.300px] leading-[14px] text-[#1d1d1d]';

function IdpAnalyzer() {
  return (
    <Node box="left-[807px] top-[305px] h-[313px] w-[536px]" tone="pink" title="IDP Analyzer" badge>
      <div className="ml-[7px] mr-[6px] flex h-[63px]">
        <Side c="bg-[#e76f05]">Local</Side>
        <div className={`${localBase} pb-[3px] pr-[17px] pt-[2px]`}>
          <Stat label="Start:" lw={22} value="3/19/2023 11:35:41 AM" vw={99} /><Stat label="End:" lw={18} value="3/19/2023 11:35:45 AM" vw={99} />
          <Stat label="Elapsed:" lw={35} value="00:00:03" vw={35} /><Stat label="Remaining:" lw={47} value="00:00:00" vw={35} />
          <span /><Stat label="Keys / sec:" lw={43} value="6,406" vw={23} />
        </div>
      </div>
      <div className="ml-[7px] mr-[8px] mt-px flex h-[199px]">
        <Side c="bg-[#48940c]">Top Ten</Side>
        <div className={tableBase}>
          <div className={`${headBase} grid-cols-[22px_196px_1fr]`}>
            <span className="border-r border-[#d8dcd6]">#</span>
            <span className="grid grid-cols-[77px_1fr] border-r border-[#d8dcd6]"><span>Value</span><span>Key Phrase</span></span>
            <span className="pl-[28px]">Key</span>
          </div>
          {idpRows.map((r, i) => (
            <div key={r[0]} className="grid h-[13px] grid-cols-[20px_76px_122px_1fr] items-center whitespace-pre pl-[6px] pt-px">
              <span>{i + 1}</span><Fit w={67}>{r[0]}</Fit><Fit w={111}>{r[1]}</Fit><span>{r[2]}</span>
            </div>
          ))}
          <HScroll c="ml-[3px] w-[119px]" />
        </div>
      </div>
    </Node>
  );
}

function TranspositionAnalyzer() {
  return (
    <Node box="left-[803px] top-[657px] h-[319px] w-[542px]" tone="pink" title="Transposition Analyzer" flash>
      <div className="ml-[6px] mr-[5px] flex h-[64px]">
        <Side c="bg-[#e76f05]">Local</Side>
        <div className={`${localBase} pb-[2px] pr-[17px] pt-[3px]`}>
          <Stat label="Start:" lw={22} value="3/19/2023 11:35:45 AM" vw={101} /><Stat label="End:" lw={18} value="3/19/2023 11:36:51 AM" vw={101} />
          <Stat label="Elapsed:" lw={35} value="00:01:05" vw={36} /><Stat label="Remaining:" lw={48} value="00:00:00" vw={36} />
          <Stat label="Currently analyzed keylength:" lw={127} value="32" vw={11} /><Stat label="Keys / sec:" lw={44} value="83,445" vw={29} />
        </div>
      </div>
      <div className="ml-[6px] mr-[6px] mt-px flex h-[203px]">
        <Side c="bg-[#48940c]">Top Ten</Side>
        <div className={tableBase}>
          <div className={`${headBase} grid-cols-[22px_55px_38px_53px_33px_1fr]`}>
            <span className="border-r border-[#d8dcd6]">#</span><span className="border-r border-[#d8dcd6]">Value</span><span className="border-r border-[#d8dcd6]">Key</span>
            <span className="border-r border-[#d8dcd6]">Key Length</span><span className="border-r border-[#d8dcd6]">Mode</span><span className="pl-[2px] text-left">Text</span>
          </div>
          {transRows.map((r, i) => (
            <div key={r[0]} className="grid h-[13.330px] grid-cols-[21px_54px_38px_52px_35px_1fr] items-center whitespace-pre pl-[6px]">
              <span>{i + 1}</span><span>{r[0]}</span><span>{r[1]}</span><span>32</span><span>R-C-C</span><span>{r[2]}</span>
            </div>
          ))}
          <HScroll c="ml-[3px] w-[146px]" />
        </div>
      </div>
    </Node>
  );
}

/* ---------- texts ---------- */
const cipherIn: [string, number][] = [
  ['PHTEWNRTTNIDTOOOAITLRIFRMANFDRENOGETI', 252], ['IHNMTHBSEHSAIBCIHEESOIGNLODPRVIIOOBEOY', 252], ['RROEDESAOTGILEFWAMSSEHEAOGNVEEAETETDF', 253],
  ['VDWEERSAWRSCEATWGTMOALOEEETTLEEAOESI', 248], ['OITRHHIKATNHNIRIISHIENTWSSCHMFAEEITRLDE', 251], ['GLIHFIIEAPILARMALNPSNNSHFSIETTSNDETTSBW', 252],
  ['TIHNNVRDSEGELSLGERCDTSRERGOARTTIDFEINE', 248], ['DMTVWNENEHDUTTLTFIXHM', 153],
];
const interOut: [string, number][] = [
  ['GPSDRCLOHPASFGENIREHDIINHBEEIAONRTCS', 238], ['EFFNOTDWTRVTWGRHROMVWHILWDEETUERI', 239], ['EETLGEMATIGMESARDDLTEHIEWIIOEAIHITFTL', 233],
  ['MEMEETRHSANHHASLTBOMATGSNTSELSIHER', 236], ['NFRONLSOOESESOVAATAKITTNITIPREBAENRE', 236], ['GWOOFWAEETVITGSIHELIDCHENTEIRTNTNREI', 236],
  ['NNFSOOTEDETEGSXSNTDIDADLNRAYERTTAINI', 239], ['IHCHWFDSPFOSMIRELTSOIELOMENSVTEIEDHA', 241], ['B', 7],
];
const finalOut: [string, number][] = [
  ['ERDEERIMMEPOTSHEVOOHINDFEGELACOTIVCS', 244], ['TTHEVBAINIIGTOSHTLASFPHGTHVTATHAUTIEW', 243], ['ASETHESEFMAGSDOFSDEGWANOWEREATTHEF', 241],
  ['LNEWXIWISSOLONDIMSFAINGNDRIFRINGORRI', 241], ['SEARLIONTORIANDTTRRTDINTHLREMENINDEE', 240], ['THERETCNTTSAITHELEILSWENEIFOTHELBESADD', 244],
  ['LHISPKPCRITEIMADGINNREDATTOLEYEWOBGEF', 245], ['IRSORETHENEWRSNOAIBVSMISETTHEML', 210],
];
const note: [React.ReactNode, number][] = [
  ['This template demonstrates a new attack on a', 234],
  [<>ciphertext encrypted with the <b>double</b></>, 191],
  [<><b>columnar transposition (DCT)</b>. It makes use of</>, 243],
  [<>the <b>IDP (Index of digraphic potential)</b></>, 202],
  [<>method developed by <b>George Lasry</b> in 2013,</>, 230],
  ['when he successfully solved the famous DCT', 226],
  [<>challenge from <b>Klaus Schmeh.</b></>, 157],
  [' ', 4],
  [<>A DCT consists of two <b>single-columnar</b></>, 202],
  [<><b>transpositions (SCT)</b>, each having its own key.</>, 238],
  ['The success of the IDP method relies on the', 223],
  ['fact that it can provide a measurement of the', 230],
  ['quality of the second key without knowing the', 235],
  ['first key. By calculating the IDP score for each', 230],
  ['potential keyphrase in a dictionary, the IDP', 218],
  ['Analysis component is able to determine a', 216],
  ['promising candidate. It then undoes the second', 243],
  ['SCT that results from this keyphrase and', 204],
  ['produces an intermediate ciphertext, which is', 230],
  ['basically just a SCT and can easily be solved in', 234],
  ['a second step with a classic hill climbing attack.', 240],
];

function Canvas() {
  return (
    <div className="relative h-[710px] w-[1660px] overflow-hidden bg-[linear-gradient(#cfe1ff,#b6d2fe)]">
      <div className="absolute -left-[201px] -top-[287px] h-[1064px] w-[1880px]">
        <div className="absolute left-[207px] top-[309px] h-[459px] w-[253px] bg-white pl-[5px] pt-px text-[11.400px] leading-[15.350px] text-[#161616]">
          {note.map(([t, w], i) => <div key={i} className="h-[15.350px]"><Fit w={w}>{t}</Fit></div>)}
        </div>
        <RedX c="left-[449px] top-[293px]" /><Grip c="left-[445px] top-[752px]" />
        <div className="absolute left-[790px] top-[288px] h-[349px] w-[569px] bg-[#d6deea]" />
        <div className="absolute left-[791px] top-[289px] h-[15px] w-[15px] border-l-2 border-t-2 border-[#a8aeb8] bg-[#edf1f6]" />
        <div className="absolute left-[1343px] top-[289px] h-[15px] w-[15px] border-r-2 border-t-2 border-[#a8aeb8] bg-[#edf1f6]" />
        <div className="absolute left-[791px] top-[619px] h-[15px] w-[15px] border-b-2 border-l-2 border-[#a8aeb8] bg-[#edf1f6]" />
        <div className="absolute left-[1343px] top-[619px] h-[15px] w-[15px] border-b-2 border-r-2 border-[#8f959e] bg-[#dfe5ee]" />
        <Grip c="left-[1344px] top-[621px]" />
        <Wires />
        <TextNode box="left-[472px] top-[305px] h-[304px] w-[270px]" title="Text Input" lines={cipherIn} status="bg-[#a8a8a8]" />
        <Caption c="left-[477px] top-[609px]" w={53}>Ciphertext</Caption>
        <IdpAnalyzer />
        <div className="absolute left-[811px] top-[599px] flex h-[15px] w-[16px] items-center justify-center rounded-[4px] bg-[#0f80d8] text-[11px] font-bold text-white">1</div>
        <Caption c="left-[812px] top-[618px]" w={100}>Step 1: IDP Analysis</Caption>
        <TranspositionAnalyzer />
        <Caption c="left-[808px] top-[976px]" w={239}>Step 2: Single-Columnar Transposition Analysis</Caption>
        <TextNode box="left-[1536px] top-[305px] h-[316px] w-[257px]" title="Text Output" lines={interOut} status="bg-[#dfdfdf]" />
        <Caption c="left-[1541px] top-[621px]" w={121}>Intermediate Ciphertext</Caption>
        <TextNode box="left-[1532px] top-[657px] h-[320px] w-[261px]" title="Text Output" lines={finalOut} status="bg-[#dfdfdf]" />
        <Caption c="left-[1538px] top-[977px]" w={108}>Decrypted Ciphertext</Caption>

        <Small box="left-[518px] top-[668px]" title="Te" pic>
          <svg className="h-[32px] w-[26px]" viewBox="0 0 26 32"><rect x="1" y="3" width="20" height="26" rx="2" fill="#c48c4c" stroke="#7a4d1e" /><path d="M6 5l3-4h5l3 4v3H6z" fill="#a8adb3" stroke="#666" /><path d="M11 12h11l3 3v15l-13 1z" fill="#f7ee2c" stroke="#a09410" /><path d="M14 17h8M14 20h8M14 23h8M14 26h8" stroke="#8a8426" /><path d="M19 13l3 2 1-4z" fill="#e33" /></svg>
        </Small>
        <Caption c="left-[523px] top-[748px]" w={55}>Split Chars</Caption>
        <Small box="left-[219px] top-[788px]" title="Fi" pic>
          <svg className="mr-[2px] h-[32px] w-[34px]" viewBox="0 0 34 32"><path d="M1 1h17l7 7v23H1z" fill="#fafcff" stroke="#7388bf" /><path d="M18 1v7h7" fill="#d9e4fb" stroke="#3a59a8" /><path d="M4 8h10M4 12h16M4 16h12M4 20h12M4 25h16M4 27.500h16" stroke="#b8c4dc" strokeDasharray="1.500 1" /><path d="M19 15h8v-4l7 6.500-7 6.500v-4h-8z" fill="#4a7ad4" stroke="#2450a0" /></svg>
        </Small>
        <Caption c="left-[224px] top-[868px]" w={52}>Dictionary</Caption>
        <Small box="left-[349px] top-[788px]" tone="lime" title="St">
          <svg className="h-[29px] w-[18px]" viewBox="0 0 18 29"><path d="M1 0h12l4 5v21l-16 3z" fill="#8d8778" /><path d="M1 0h11l5 6v8H1z" fill="#f0a81c" /><path d="M12 0l5 6-3 1z" fill="#e8361c" /><text x="2" y="10" fontSize="8" fontWeight="700" fontFamily="DejaVu Sans Mono" fill="#5c4300">01</text><text x="2" y="19" fontSize="7.500" fontWeight="700" fontFamily="DejaVu Sans Mono" fill="#222">XYA</text><text x="2" y="26.500" fontSize="7.500" fontWeight="700" fontFamily="DejaVu Sans Mono" fill="#222">WEY</text></svg>
        </Small>
        <Caption c="left-[354px] top-[868px]" w={71}>String Encode</Caption>
        <Small box="left-[486px] top-[788px]" title="St"><ArrowPic /></Small>
        <Caption c="left-[492px] top-[868px]" w={40}>Replace</Caption>
        <Small box="left-[617px] top-[788px]" title="St"><ArrowPic /></Small>
        <Caption c="left-[622px] top-[868px]" w={23}>Split</Caption>

        <div className="absolute left-[207px] top-[902px] h-[69px] w-[538px] bg-white pl-[5px] text-[11.400px] leading-[15.350px] text-[#161616]">
          <div className="h-[15.350px]"><Fit w={518}>If you want to analyze your own ciphertexts and the IDP analysis component does not find the correct</Fit></div>
          <div className="h-[15.350px]"><Fit w={524}>key phrase in the provided dictionary, you should try using a different dictionary. The following link is a</Fit></div>
          <div className="h-[15.350px]"><Fit w={392}>good source for dictionaries: <b>http://www.ngrams.info/download_coca.asp</b></Fit></div>
        </div>
        <RedX c="left-[734px] top-[886px]" /><Grip c="left-[731px] top-[954px]" />

        <div className="absolute left-[201px] top-[975px] flex h-[22px] w-[144px] items-center rounded-t-[5px] border-r border-t border-[#8b9fc2] bg-[linear-gradient(#dfe7f4,#bccce6)] pl-[14px] text-[12px] font-bold text-[#24375c]">
          <Fit w={26}>77%</Fit>
          <svg className="ml-[8px] h-[18px] w-[94px]" viewBox="0 0 94 18">
            <path d="M1.500 1v16" stroke="#aab6cc" />
            <path d="M22 9h54" stroke="#b4b7bd" strokeWidth="3" />
            <circle cx="13" cy="9" r="7.500" fill="#b7ccf2" stroke="#8ea4cc" /><path d="M9 9h8" stroke="#fff" strokeWidth="2" />
            <circle cx="36" cy="9" r="8" fill="#fff" /><circle cx="36" cy="9" r="6.500" fill="#3f3f3f" />
            <circle cx="85" cy="9" r="7.500" fill="#b7ccf2" stroke="#8ea4cc" /><path d="M81 9h8M85 5v8" stroke="#fff" strokeWidth="2" />
          </svg>
        </div>
      </div>
    </div>
  );
}

function Workspace() {
  return (
    <main className="flex w-[1681px] flex-col">
      <Tabs />
      <div className="flex flex-col border-l-2 border-[#dfe5ec] bg-[#e6e9ec] pb-[3px] pt-[13px]">
        <div className="flex h-[41px] border-b-2 border-t border-b-[#8e9abb] border-t-[#b4bccb] bg-[linear-gradient(#e5eaf4,#b9c9e6)]">
          <div className="ml-[753px] flex w-[139px] border-r border-[#b1bacb]">
            <div className="flex w-[46px] items-center justify-center border-l border-[#b1bacb]">
              <svg className="h-[31px] w-[31px]" viewBox="0 0 31 31"><rect width="31" height="31" rx="3" fill="#2a2a2a" /><path d="M13 2h5v5h4l-6.500 7L9 7h4zM13 29h5v-5h4l-6.500-7L9 24h4z" fill="#fff" /></svg>
            </div>
            <div className="flex w-[46px] items-center justify-center border-l border-[#b1bacb] text-[#2a2a2a]"><FaCamera className="h-[32px] w-[33px]" /></div>
            <div className="flex w-[46px] items-center justify-center border-l border-[#b1bacb]">
              <svg className="h-[30px] w-[32px]" viewBox="0 0 32 30"><path d="M3 0h26q3 0 3 3v14q0 3-3 3h-3q-1 7-10 10 4-4 3-10H3q-3 0-3-3V3q0-3 3-3z" fill="#2a2a2a" /></svg>
            </div>
          </div>
          <div className="ml-auto flex items-center text-[#2f2f2f]"><FaCog className="h-[31px] w-[31px]" /></div>
        </div>
        <div className="h-[20px] border-y border-[#f0d21e] bg-[repeating-linear-gradient(153.400deg,#a9bc10_0_12px,#bed02a_12.500px_21px,#a9bc10_21.500px)] pl-[456px] text-[12.500px] font-semibold leading-[19px] text-[#4d5616]">
          <Fit w={790}>Calculation finished after 01:09 minutes (To stop the workspace please push the stop button or enter new data to start a new calculation)</Fit>
        </div>
        <div className="flex">
          <Canvas />
          <div className="flex h-[690px] w-[19px] flex-col bg-[#f0f0f0]">
            <Chevron c="ml-[6px] mt-[4px] h-[12px] w-[12px]" d="M1 9l5-6 5 6" />
            <div className="mt-[4px] h-[633px] bg-[#cdcdcd]" />
            <Chevron c="ml-[6px] mt-[20px] h-[12px] w-[12px]" d="M1 3l5 6 5-6" />
          </div>
        </div>
      </div>
    </main>
  );
}

/* ---------- taskbar ---------- */
function App1({ x, dot, children }: Kids & { x: string; dot?: boolean }) {
  return (
    <div className={`relative flex h-[56px] w-[30px] items-center justify-center ${x}`}>
      {children}
      {dot && <i className="absolute bottom-[3px] h-[4px] w-[8px] rounded-full bg-[#9b9193]" />}
    </div>
  );
}

function Taskbar() {
  return (
    <footer className="flex h-[64px] flex-col text-white">
      <div className="h-[8px] bg-[linear-gradient(90deg,#1f2126_0_50px,#26282d_50px_350px,#303238_350px_1580px,#26292d_1580px)]" />
      <div className="relative flex h-[56px] items-center border-t border-[#55494c] bg-[linear-gradient(90deg,#251c2e_0,#261b33_540px,#34212b_720px,#38241f_900px,#421a1a_1180px,#4c1014_1290px,#431611_1480px,#3a1913_1700px,#36191d_1880px)]">
        <div className="h-[25px] w-[13px] rounded-r-full bg-[linear-gradient(#f7b02d,#f26b15)]" />
        <div className="ml-[11px] flex w-[60px] flex-col items-start pt-px text-[13.500px] leading-[20px]"><Fit w={27}>11°C</Fit><Fit w={42} c="text-[#c9c4cc]">Sunny</Fit></div>
        <svg className="ml-[433px] h-[29px] w-[29px]" viewBox="0 0 29 29"><defs><linearGradient id="win" x1="0" y1="0" x2="1" y2="1"><stop offset="0" stopColor="#8be0ff" /><stop offset="1" stopColor="#1190f5" /></linearGradient></defs><path d="M0 0h14v14H0zM15.500 0H29v14H15.500zM0 15.500h14V29H0zM15.500 15.500H29V29H15.500z" fill="url(#win)" /></svg>
        <div className="ml-[18px] flex h-[40px] w-[274px] items-center rounded-full border border-white/5 bg-white/10 pl-[13px] text-[15.500px] text-[#d4cdd2]">
          <svg className="h-[20px] w-[20px]" viewBox="0 0 20 20" fill="none" stroke="#e6e2e6" strokeWidth="1.800"><circle cx="8.500" cy="8" r="6.800" /><path d="M13.500 13l5.500 6" /></svg>
          <div className="ml-[12px]"><Fit w={51}>Search</Fit></div>
        </div>
        <App1 x="ml-[15px]"><svg className="h-[28px] w-[30px]" viewBox="0 0 30 28"><path d="M8 0h22v21H8z" fill="#ececec" /><path d="M0 8h22v20H0z" fill="#7d7878" opacity=".85" /></svg></App1>
        <App1 x="ml-[25px]"><svg className="-ml-[3px] h-[29px] w-[29px]" viewBox="0 0 29 29"><path d="M15 0a14 14 0 0 1 0 28H1l2-7A14 14 0 0 1 15 0z" fill="#7a74d6" /><path d="M29 14a14 14 0 0 1-14 14H1z" fill="#5a55b8" /><rect x="6" y="9" width="12" height="11" rx="2" fill="#fff" /><path d="M19 13l4-3v9l-4-3z" fill="#fff" /></svg></App1>
        <App1 x="ml-[25px]"><svg className="h-[28px] w-[30px]" viewBox="0 0 30 28"><path d="M0 2q0-1 1-1h10l3 3h-2v4H0z" fill="#e59b12" /><path d="M0 6h12l3-2h14q1 0 1 1v22H0z" fill="#ffcf47" /><path d="M5 28v-6q0-2 2-2h16q2 0 2 2v6z" fill="#0f6cc0" /><path d="M9 24h12" stroke="#0a4a8a" strokeWidth="1.500" /></svg></App1>
        <App1 x="ml-[25px]" dot><span className="flex h-[30px] w-[30px] items-center justify-center rounded-full bg-[#5865f2]"><FaDiscord className="h-[20px] w-[19px]" /></span></App1>
        <App1 x="ml-[25px]"><span className="flex h-[28px] w-[28px] items-center justify-center rounded-[2px] bg-[#30709c]"><svg className="h-[26px] w-[26px]" viewBox="0 0 26 26" fill="none" stroke="#dcebf5" strokeWidth="1.100"><path d="M7 22Q2 16 4 10 0 4 4 3q7-1 11 7 2 5 3 9l6 4-5-.5M7 22l2-5 6 4M19 2l1 4 4 1-2-4z" /></svg></span></App1>
        <App1 x="ml-[25px]">
          <span className="flex h-[29px] w-[29px] items-center justify-center rounded-full bg-white">
            <svg className="h-[20px] w-[20px]" viewBox="0 0 20 20" strokeWidth="3.600" strokeLinecap="round">
              <path d="M7.500 2v0M2 7.500h5.500" stroke="#36c5f0" /><path d="M12.500 2v5.500M18 7.500v0" stroke="#2eb67d" /><path d="M18 12.500h-5.500M12.500 18v0" stroke="#ecb22e" /><path d="M7.500 18v-5.500M2 12.500v0" stroke="#e01e5a" />
            </svg>
          </span>
        </App1>
        <App1 x="ml-[25px]" dot><span className="relative flex h-[30px] w-[28px] items-center justify-center"><i className="h-[18px] w-[16px] rounded-b-[8px] bg-white" /><SiBrave className="absolute inset-0 h-[30px] w-[28px] text-[#fb4a1c]" /></span></App1>
        <div className="relative ml-[15px] flex h-[50px] w-[50px] items-center justify-center rounded-[4px] border border-white/10 bg-white/10">
          <span className="flex h-[29px] w-[30px] items-center justify-center rounded-[4px] bg-[linear-gradient(#fdfeff,#ccd9ea)]"><CtMark c="h-[21px] w-[23px]" color="#1e4c8c" /></span>
          <i className="absolute -bottom-px h-[4px] w-[20px] rounded-full bg-[#d69be6]" />
        </div>
        <App1 x="ml-[15px]" dot><svg className="h-[30px] w-[24px]" viewBox="0 0 24 30"><rect x="1" y="3" width="22" height="26" rx="2" fill="#4cc0da" /><path d="M1 27h22v2q0 1-2 1H3q-2 0-2-1z" fill="#a5580f" /><path d="M1 25h22v2H1z" fill="#eee" /><path d="M4 0v5M8 0v5M12 0v5M16 0v5M20 0v5" stroke="#0d5878" strokeWidth="1.500" /><path d="M6 10h12M6 15h12M6 20h12" stroke="#0b6485" strokeWidth="1.800" /></svg></App1>
        <svg className="ml-[290px] h-[22px] w-[118px]" viewBox="0 0 118 22" fill="none" stroke="#fff" strokeWidth="1.700">
          <path d="M1 14l6.500-6.500L14 14" />
          <path d="M38 8q9.500-9 19.500 0M41 11.500q6.500-6 13.500 0M44 15q3.500-3 7.500 0" /><circle cx="47.800" cy="17" r="1.800" fill="#fff" stroke="none" />
          <path d="M68 7.500h4l5-4.500v14l-5-4.500h-4zM80 7q2.500 3 0 6M83 4.500q4.500 5.500 0 11M86 2.500q6 7.500 0 15" strokeWidth="1.400" />
          <rect x="98.500" y="4.500" width="17" height="11" rx="3" /><path d="M101 7h6v6h-6z" fill="#fff" stroke="none" /><path d="M117 8v4" strokeWidth="2" />
        </svg>
        <div className="ml-auto flex w-[80px] flex-col items-end pb-px text-[13.500px] leading-[20px]"><Fit w={64}>11:37 AM</Fit><Fit w={70}>3/19/2023</Fit></div>
        <div className="ml-[14px] mr-[25px] flex h-[20px] w-[20px] items-center justify-center rounded-full bg-[#dd9ee8] text-[12px] text-[#2b1030]">6</div>
      </div>
    </footer>
  );
}

export default function App() {
  return (
    <div className="flex h-[1064px] w-[1880px] flex-col overflow-hidden bg-[#b9d3f6] font-['Open_Sans','Noto_Sans',sans-serif]">
      <Ribbon />
      <div className="flex h-[833px] justify-between">
        <div className="pt-[7px]"><Sidebar /></div>
        <div className="flex pt-[13px]"><Workspace /></div>
      </div>
      <Taskbar />
    </div>
  );
}
